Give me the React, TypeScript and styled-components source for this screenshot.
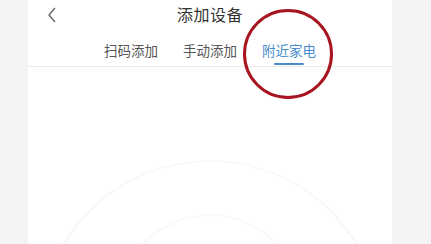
import React, { useState } from 'react';
import styled, { createGlobalStyle } from 'styled-components';

const GlobalStyle = createGlobalStyle`
    html, body {
        margin: 0;
        padding: 0;
        background: #f4f4f4;
        font-family: "Noto Sans CJK SC", "Noto Sans", sans-serif;
    }
`

const Page = styled.div`
    position: relative;
    display: flex;
    height: 244px;
    overflow: hidden;
`

const Side = styled.div<{ $width: number }>`
    width: ${p => p.$width}px;
    flex-shrink: 0;
    background: #f4f4f4;
`

const Phone = styled.div`
    width: 364px;
    flex-shrink: 0;
    background: #fff;
    display: flex;
    flex-direction: column;
`

const TitleBar = styled.div`
    height: 30px;
    display: flex;
    align-items: center;
    padding-left: 19px;
    position: relative;
`

const BackIcon = styled.svg`
    width: 10px;
    height: 16px;
`

const Title = styled.div`
    position: absolute;
    left: 0;
    right: 0;
    top: 2px;
    text-align: center;
    font-size: 16px;
    line-height: 24px;
    color: #333;
    letter-spacing: 0.5px;
`

const Tabs = styled.div`
    height: 37px;
    display: flex;
    justify-content: center;
    gap: 25px;
    border-bottom: 1px solid #ececec;
    box-sizing: border-box;
`

const Tab = styled.button<{ $active: boolean }>`
    position: relative;
    border: none;
    background: none;
    padding: 4px 0 0;
    font-family: inherit;
    font-size: 13.5px;
    color: ${p => (p.$active ? '#4a8ccd' : '#555')};
    cursor: pointer;
    height: 100%;

    &::after {
        content: '';
        display: ${p => (p.$active ? 'block' : 'none')};
        position: absolute;
        left: 50%;
        bottom: 1px;
        width: 30px;
        height: 2px;
        border-radius: 1px;
        background: #4a8ccd;
        transform: translateX(-50%);
    }
`

const Content = styled.div`
    flex: 1;
    position: relative;
`

const Radar = styled.svg`
    display: block;
    width: 100%;
    height: 100%;
`

const Annotation = styled.div`
    position: absolute;
    left: 243px;
    top: 9px;
    width: 84px;
    height: 84px;
    border: 3px solid #a8141f;
    border-radius: 50%;
    pointer-events: none;
`

const tabs = ['扫码添加', '手动添加', '附近家电'];

export default function App() {
    const [active, setActive] = useState(2);

    return (
        <Page>
            <GlobalStyle />
            <Side $width={28} />
            <Phone>
                <TitleBar>
                    <BackIcon viewBox="0 0 10 16">
                        <path d="M8 1L2 8l6 7" fill="none" stroke="#666" strokeWidth="1.4" />
                    </BackIcon>
                    <Title>添加设备</Title>
                </TitleBar>
                <Tabs>
                    {tabs.map((t, i) => (
                        <Tab key={t} $active={i === active} onClick={() => setActive(i)}>{t}</Tab>
                    ))}
                </Tabs>
                <Content>
                    <Radar viewBox="0 0 364 177">
                        <circle cx="182" cy="264" r="170" fill="none" stroke="#f8f8f8" strokeWidth="2" />
                        <circle cx="182" cy="240" r="92" fill="none" stroke="#f9f9f9" strokeWidth="2" />
                    </Radar>
                </Content>
            </Phone>
            <Side $width={39} />
            <Annotation />
        </Page>
    );
}
